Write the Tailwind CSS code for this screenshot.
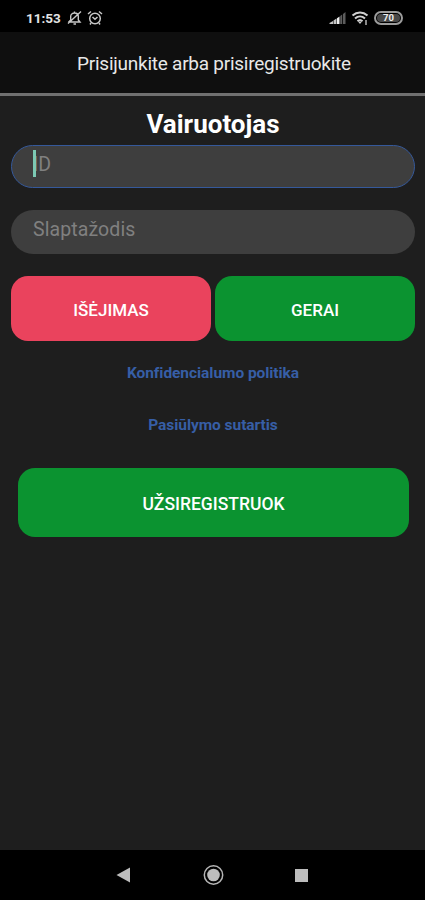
<!DOCTYPE html>
<html lang="lt">
<head>
<meta charset="utf-8">
<title>Prisijunkite</title>
<script src="https://cdn.jsdelivr.net/npm/@tailwindcss/browser@4"></script>
</head>
<body class="bg-[#1e1e1e] font-[Roboto,sans-serif]">
<div class="flex h-[900px] w-[425px] flex-col overflow-hidden bg-[#1e1e1e] text-white">
  <div class="flex h-[32px] shrink-0 items-center bg-black pt-[4px] pl-[26px] pr-[22px]">
    <span class="w-[35px] whitespace-nowrap text-[13.5px] leading-4 font-bold text-[#e4e4e4]">11:53</span>
    <svg class="ml-[6px]" width="15" height="16" viewBox="0 0 15 16" fill="none" stroke="#c8c8c8" stroke-width="1.4"><path d="M2 12h11L11.300 10V6.500C11.300 4 9.500 3 7.500 3S3.700 4.500 3.700 6.500V10L1.500 12.300M14 1.500L1 13.500M6.500 14h2.500M7.500 1.500V3"/></svg>
    <svg class="ml-[5px]" width="16" height="16" viewBox="0 0 16 16" fill="none" stroke="#c8c8c8" stroke-width="1.5"><circle cx="8" cy="8.500" r="5.300"/><path d="M1 4L4 1.500M15 4L12 1.500M5.500 7L8 9.300L10.500 7M4 13l-1 1.500M12 13l1 1.500"/></svg>
    <div class="flex-1"></div>
    <svg width="17" height="14" viewBox="0 0 17 14"><path d="M0.500 13V12L4 10V13zM4.500 13V9.500L7.500 7.500V13z" fill="#c4c4c4"/><path d="M8 13V7.200L10.500 5.500V13z" fill="#f0f0f0"/><path d="M11.200 13V5L13.200 3.500V13zM14 13V3L16.500 1V13z" fill="#5c5c5c"/></svg>
    <svg class="ml-[5px]" width="19" height="16" viewBox="0 0 19 16" fill="none" stroke="#cfcfcf" stroke-width="2"><path d="M1.500 5.500C6 1.500 12 1.500 16.500 5.500M4 8.500C7 5.700 11 5.700 14 8.500M6.500 11.200C8 9.700 10 9.700 11.500 11.200"/><path d="M7 11.500L9 14L11 11.500z" fill="#cfcfcf" stroke="none"/><path d="M15 10v5" stroke="#888" stroke-width="2"/></svg>
    <div class="ml-[4px] flex h-[14px] w-[29px] items-center justify-center rounded-full border-2 border-[#9c9c9c] p-px"><span class="flex h-[8px] w-full items-center justify-center rounded-full bg-[#484848] text-[9.5px] leading-none font-bold text-[#eee]">70</span></div>
  </div>
  <header class="flex h-[61px] shrink-0 items-center justify-center bg-[#0f0f0f] pl-[3px] pt-[3px]">
    <h1 class="whitespace-nowrap text-[19px] leading-6 tracking-[-0.25px] text-[#e8e8e8]">Prisijunkite arba prisiregistruokite</h1>
  </header>
  <div class="h-[3px] shrink-0 bg-[#707070]"></div>
  <main class="flex flex-1 flex-col pl-[11px] pr-[10px] pt-[13px]">
    <h2 class="h-[36px] text-center text-[26px] leading-[31px] font-bold">Vairuotojas</h2>
    <div class="flex h-[43px] items-start rounded-full border border-[#35599b] bg-[#3e3e3e] pl-[21px] pt-[4px]">
      <div class="relative text-[19.5px] leading-[29px] text-[#808080]">ID<span class="absolute top-0 left-0 h-[27px] w-[3px] bg-[#7cc9b4]"></span></div>
    </div>
    <div class="mt-[22px] flex h-[44px] items-start rounded-full bg-[#3e3e3e] pl-[22px] pt-[5px] text-[19.5px] leading-[29px] text-[#808080]"><span class="tracking-[0.1px]">Slaptažodis</span></div>
    <div class="mt-[22px] flex h-[65px] gap-[4px] text-[17px] font-medium">
      <button class="flex-1 rounded-[17px] bg-[#ea435d] pt-[4px]">IŠĖJIMAS</button>
      <button class="flex-1 rounded-[17px] bg-[#0b9330] pt-[4px]">GERAI</button>
    </div>
    <a class="mt-[22px] text-center text-[15.5px] leading-5 font-bold tracking-[-0.05px] text-[#375ea6]">Konfidencialumo politika</a>
    <a class="mt-[32px] text-center text-[15.5px] leading-5 font-bold tracking-[-0.05px] text-[#375ea6]">Pasiūlymo sutartis</a>
    <button class="mt-[33px] mr-[6px] ml-[7px] h-[69px] rounded-[17px] bg-[#0b9330] pt-[3px] text-[17.5px] font-medium">UŽSIREGISTRUOK</button>
  </main>
  <nav class="flex h-[50px] shrink-0 items-center bg-black pl-[116px]">
    <svg width="15" height="16" viewBox="0 0 15 16"><path d="M0.500 8L14 0.500V15.500z" fill="#bdbdbd"/></svg>
    <svg class="ml-[72px]" width="22" height="22" viewBox="0 0 22 22"><circle cx="10.500" cy="11" r="9.200" fill="none" stroke="#b5b5b5" stroke-width="1.500"/><circle cx="10.500" cy="11" r="6.300" fill="#bdbdbd"/></svg>
    <div class="ml-[70px] h-[13px] w-[13px] bg-[#bdbdbd]"></div>
  </nav>
</div>
</body>
</html>
